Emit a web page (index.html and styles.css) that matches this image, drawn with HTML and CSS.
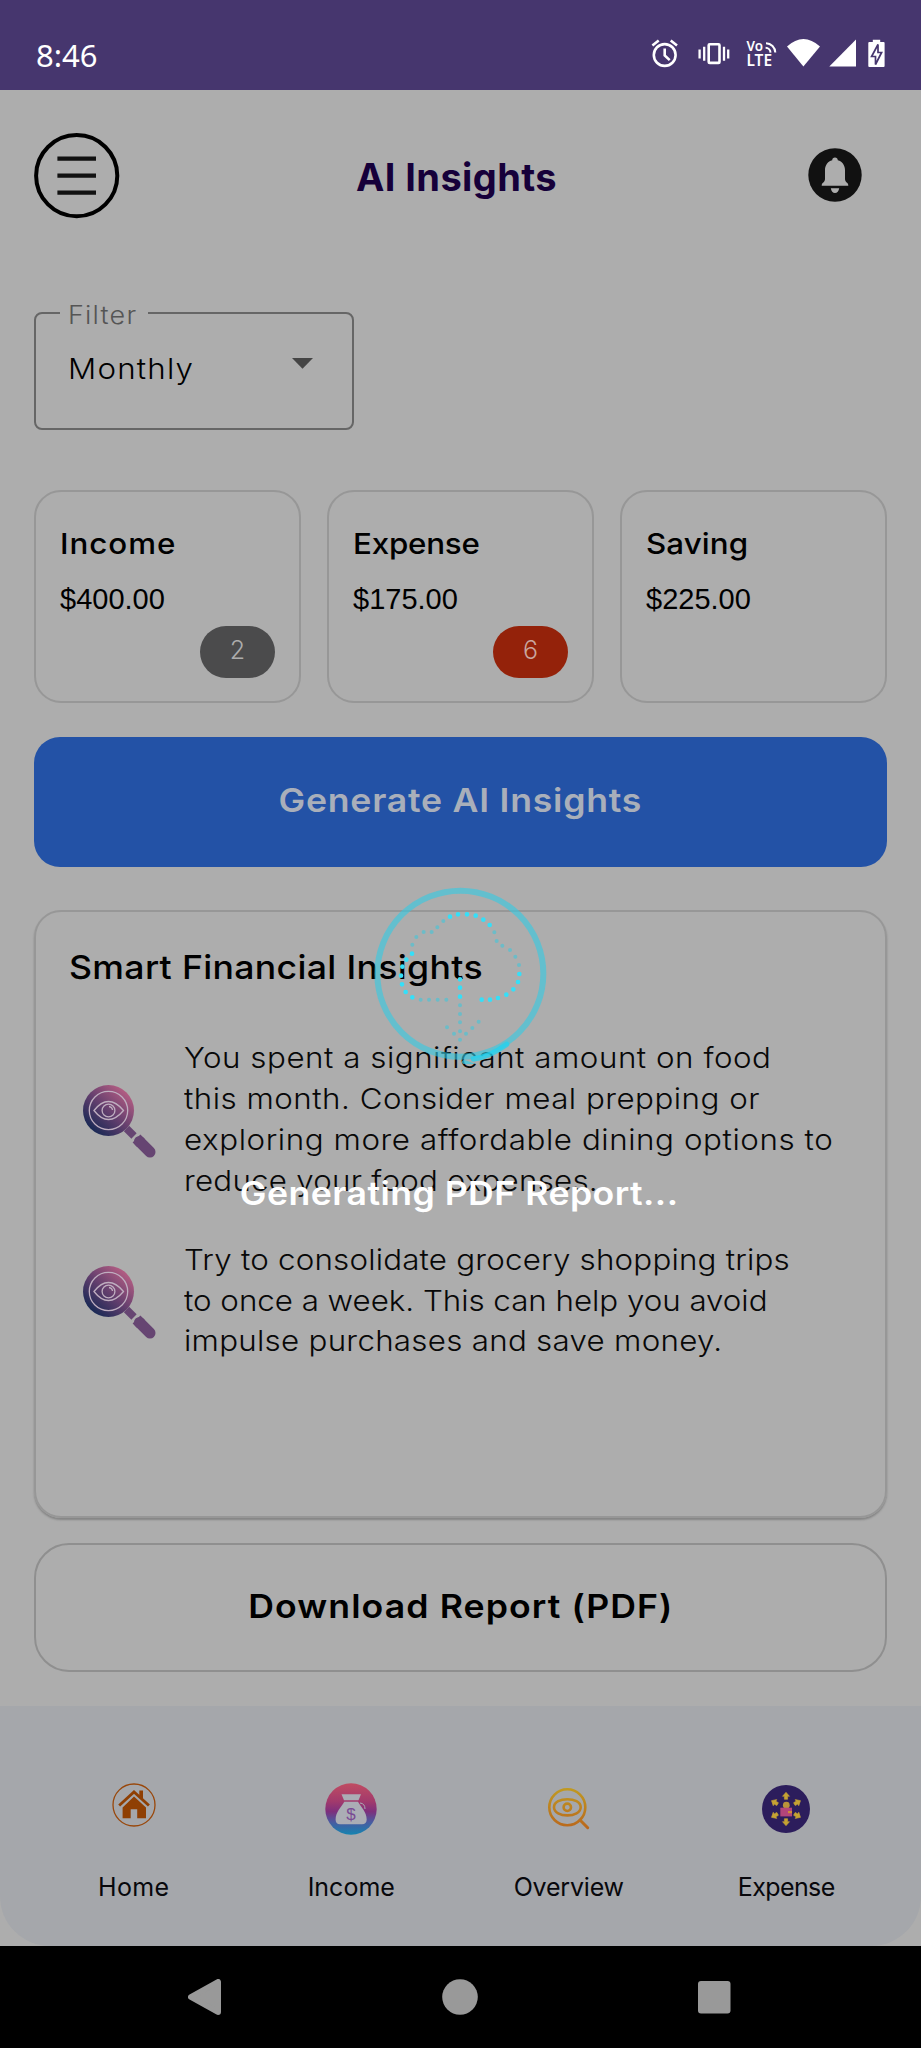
FILE: index.html
```html
<!DOCTYPE html>
<html lang="en">
<head>
<meta charset="utf-8">
<title>AI Insights</title>
<link rel="stylesheet" href="styles.css">
</head>
<body>
<div class="screen">
  <div class="status">
    <span class="clock">8:46</span>
    <svg class="status-icons" width="236" height="32" viewBox="0 0 236 32" fill="none" stroke="#fff" stroke-width="2.6">
      <circle cx="14.7" cy="17" r="10.9"/>
      <path d="M14.7 10.5v7l5 4.6M2.4 7.4l6.3-5M20.7 2.4l6.3 5"/>
      <rect x="58.7" y="6.3" width="10.8" height="18.6" rx="1"/>
      <path d="M54.2 8.7v14M49.6 11.5v9M74 8.7v14M78.2 11.5v9" stroke-width="2.3"/>
      <g class="volte" fill="#fff" stroke="none">
        <text x="96.5" y="13" font-size="13.5" textLength="16.5" lengthAdjust="spacingAndGlyphs">Vo</text>
        <text x="96.5" y="28.3" font-size="15.5" textLength="25.5" lengthAdjust="spacingAndGlyphs">LTE</text>
      </g>
      <path d="M116 5.3a9.5 9.5 0 0 1 9.3 9.3M115.6 9.8a5 5 0 0 1 4.9 4.8" stroke-width="2"/>
      <g fill="#fff" stroke="none">
        <path d="M153.4 28.5 137 8.5Q153.4-6.5 170 8.5Z"/>
        <path d="M179.3 28.5 206 1.6V28.5Z"/>
        <path d="M222.8 4V1.8h7.4V4h3.4a1 1 0 0 1 1 1v23a1 1 0 0 1-1 1h-14.3a1 1 0 0 1-1-1V5a1 1 0 0 1 1-1Z"/>
      </g>
      <path d="M228 6.5 221.6 18.500H225.500V26.500L231.600 14.500H228Z" fill="#fff" stroke="#46366e" stroke-width="1.7"/>
    </svg>
  </div>

  <header class="header">
    <svg width="86" height="86" viewBox="0 0 86 86" fill="none">
      <circle cx="42.700" cy="42.700" r="40.600" stroke="#000" stroke-width="4"/>
      <path d="M23.400 25.700H62M23.400 42.600H62M23.400 59.700H62" stroke="#111" stroke-width="4.200"/>
    </svg>
    <h1 class="title">AI Insights</h1>
    <svg class="bell" width="54" height="54" viewBox="0 0 54 54">
      <circle cx="27" cy="27" r="26.700" fill="#111"/>
      <path fill="#adadad" d="M27 9.500c-1.700 0-2.700 1-2.800 2.700-4.400 1.200-7.200 5-7.200 9.800v9c0 1.600-.7 2.600-2 3.700-.9.700-1.300 1.500-1.300 3h26.600c0-1.500-.4-2.300-1.300-3-1.300-1.100-2-2.100-2-3.700v-9c0-4.800-2.800-8.600-7.200-9.800-.1-1.700-1.100-2.700-2.800-2.700ZM22.800 40.300h8.400c-.5 3-2 4.700-4.200 4.700s-3.700-1.700-4.200-4.700Z"/>
    </svg>
  </header>

  <main class="content">
    <div class="filter">
      <div class="filter-label"><div class="wide">Filter</div></div>
      <div class="filter-value wide">Monthly</div>
      <svg class="caret" width="21" height="11" viewBox="0 0 21 11"><path d="M0 0H21L10.500 10.800Z" fill="#454545"/></svg>
    </div>

    <section class="stats">
      <div class="stat">
        <div class="stat-name wide ls-income">Income</div>
        <div class="stat-value">$400.00</div>
        <div class="badge badge-gray">2</div>
      </div>
      <div class="stat">
        <div class="stat-name wide ls-expense">Expense</div>
        <div class="stat-value">$175.00</div>
        <div class="badge badge-red">6</div>
      </div>
      <div class="stat">
        <div class="stat-name wide ls-saving">Saving</div>
        <div class="stat-value">$225.00</div>
      </div>
    </section>

    <div class="generate"><span class="wide-center">Generate AI Insights</span></div>

    <section class="card">
      <h2 class="card-title wide">Smart Financial Insights</h2>
      <div class="insight">
        <svg class="lens" width="73" height="73" viewBox="0 0 73 73" fill="none">
          <defs><linearGradient id="lens" x1="42" y1="7" x2="9" y2="44" gradientUnits="userSpaceOnUse"><stop offset="0" stop-color="#b05c82"/><stop offset=".5" stop-color="#653f6e"/><stop offset="1" stop-color="#1c2a56"/></linearGradient></defs>
          <circle cx="25.500" cy="25.500" r="25.500" fill="url(#lens)"/>
          <g stroke="#bfaec0" stroke-width="1.300"><circle cx="25.500" cy="25.500" r="19.200"/><path d="M11 25.500Q18 16.500 25.500 16.500T40.500 25.500Q33 34.500 25.500 34.500T11 25.500Z"/><circle cx="25.500" cy="25.500" r="6.400"/><path d="M26 21.500q3 .3 3.600 3.500"/></g>
          <path d="M43.500 43.500 51 51" stroke="#664572" stroke-width="7.500"/>
          <path d="M53.500 53.500 58 58" stroke="#664572" stroke-width="11"/>
          <path d="M56.500 56.500 67 67" stroke="#664572" stroke-width="11" stroke-linecap="round"/>
        </svg>
        <p class="insight-text">
          <span class="wide l1">You spent a significant amount on food</span>
          <span class="wide l2">this month. Consider meal prepping or</span>
          <span class="wide l3">exploring more affordable dining options to</span>
          <span class="wide l3b">reduce your food expenses.</span>
        </p>
      </div>
      <div class="insight">
        <svg class="lens" width="73" height="73" viewBox="0 0 73 73" fill="none">
          <circle cx="25.500" cy="25.500" r="25.500" fill="url(#lens)"/>
          <g stroke="#bfaec0" stroke-width="1.300"><circle cx="25.500" cy="25.500" r="19.200"/><path d="M11 25.500Q18 16.500 25.500 16.500T40.500 25.500Q33 34.500 25.500 34.500T11 25.500Z"/><circle cx="25.500" cy="25.500" r="6.400"/><path d="M26 21.500q3 .3 3.600 3.500"/></g>
          <path d="M43.500 43.500 51 51" stroke="#664572" stroke-width="7.500"/>
          <path d="M53.500 53.500 58 58" stroke="#664572" stroke-width="11"/>
          <path d="M56.500 56.500 67 67" stroke="#664572" stroke-width="11" stroke-linecap="round"/>
        </svg>
        <p class="insight-text">
          <span class="wide l4">Try to consolidate grocery shopping trips</span>
          <span class="wide l5">to once a week. This can help you avoid</span>
          <span class="wide l6">impulse purchases and save money.</span>
        </p>
      </div>
    </section>

    <div class="download"><span class="wide-center">Download Report (PDF)</span></div>
  </main>

  <nav class="tabs">
    <div class="tab">
      <div class="tab-icon">
        <svg class="home" width="44" height="44" viewBox="0 0 44 44" fill="#8f3f03">
          <circle cx="22" cy="22" r="21" fill="none" stroke="#99470a" stroke-width="1.300"/>
          <path d="M27.300 7.500H31V16L27.300 12.500Z"/>
          <path d="M7.200 22.500 22 9 36.900 22.500" fill="none" stroke="#8f3f03" stroke-width="2.800"/>
          <path d="M22 13.500 34 24.500V35.300H25.200V26.300H18.700V35.300H10.600V24.500Z"/>
        </svg>
      </div>
      <span class="tab-name ls-tab-home">Home</span>
    </div>
    <div class="tab">
      <div class="tab-icon">
        <svg width="52" height="52" viewBox="0 0 52 52">
          <defs><linearGradient id="bag" x1="0" y1="0" x2="0" y2="1"><stop offset="0" stop-color="#c04c62"/><stop offset=".35" stop-color="#a23a6c"/><stop offset=".55" stop-color="#7e2f7c"/><stop offset=".75" stop-color="#4a5aa0"/><stop offset="1" stop-color="#1484b0"/></linearGradient></defs>
          <circle cx="26" cy="26" r="25.700" fill="url(#bag)"/>
          <g fill="#abadb5"><path d="M16.500 11.300H36L33.500 17.300H19Z"/><path d="M19.300 18.800H33C36 24 41.700 29 41.700 36.500 41.700 39.500 40 41.300 37 41.300H15C12 41.300 10.600 39.500 10.600 36.500 10.600 29 16.300 24 19.300 18.800Z"/></g>
          <path d="M35 20q5 .5 5 6" fill="none" stroke="#abadb5"/>
          <text class="dollar" x="26" y="36.500" text-anchor="middle">$</text>
        </svg>
      </div>
      <span class="tab-name">Income</span>
    </div>
    <div class="tab">
      <div class="tab-icon">
        <svg width="42" height="42" viewBox="0 0 42 42" fill="none" stroke="url(#gold)" stroke-width="2.600">
          <defs><linearGradient id="gold" x1="0" y1="0" x2="0" y2="42" gradientUnits="userSpaceOnUse"><stop offset="0" stop-color="#c09a22"/><stop offset="1" stop-color="#b9651c"/></linearGradient></defs>
          <circle cx="19.300" cy="19.300" r="18"/>
          <path d="M6 19.300C6 8.500 32.700 8.500 32.700 19.300S6 30.100 6 19.300Z"/>
          <circle cx="19.300" cy="19.300" r="3.700"/>
          <path d="M32 32 39.700 39.700" stroke-width="3" stroke-linecap="round"/>
        </svg>
      </div>
      <span class="tab-name ls-tab-over">Overview</span>
    </div>
    <div class="tab">
      <div class="tab-icon">
        <svg width="48" height="48" viewBox="0 0 48 48">
          <defs><path id="arrow" d="M24 7.300 27.500 11.300H25.600V14.300H22.400V11.300H20.500Z"/></defs>
          <circle cx="24" cy="24" r="24" fill="#2c1d5c"/>
          <g fill="#c5a233" stroke="#c5a233" stroke-width=".6">
            <use href="#arrow"/><use href="#arrow" transform="rotate(60 24 24)"/><use href="#arrow" transform="rotate(120 24 24)"/><use href="#arrow" transform="rotate(180 24 24)"/><use href="#arrow" transform="rotate(240 24 24)"/><use href="#arrow" transform="rotate(300 24 24)"/>
          </g>
          <circle cx="24.300" cy="20.200" r="3.400" fill="#b9923a"/>
          <rect x="18.300" y="22.700" width="11.700" height="8.700" fill="#b3457a"/>
          <rect x="26" y="26" width="4" height="2.200" fill="#d08a3a"/>
        </svg>
      </div>
      <span class="tab-name ls-tab-exp">Expense</span>
    </div>
  </nav>

  <div class="sysnav">
    <svg width="34" height="36" viewBox="0 0 34 36"><path d="M3 18 30 3V33Z" fill="#999" stroke="#999" stroke-width="6" stroke-linejoin="round"/></svg>
    <svg width="36" height="36" viewBox="0 0 36 36"><circle cx="18" cy="18" r="17.800" fill="#999"/></svg>
    <svg width="33" height="33" viewBox="0 0 33 33"><rect width="32.500" height="32.500" rx="3" fill="#999"/></svg>
  </div>

  <div class="overlay">
    <svg class="spinner" width="180" height="180" viewBox="90 42 540 540" fill="none">
      <circle cx="361" cy="311" r="249" stroke="#32cbe4" stroke-opacity=".6" stroke-width="18"/>
      <path d="M400 567Q450 560 500 523" stroke="#1fd3f0" stroke-opacity=".75" stroke-width="16" stroke-linecap="round"/>
      <path d="M372 576 402 586" stroke="#35cbe2" stroke-opacity=".7" stroke-width="12" stroke-linecap="round"/>
      <path class="dots" d="M330 140h0M354 133h0M381 133h0M407 137h0M430 149h0M449 165h0M216 251h0M199 269h0M187 290h0M183 317h0M186 343h0M197 366h0M217 382h0M360 328h0M360 353h0M360 380h0M538 312h0M534 336h0M520 358h0M499 374h0M474 384h0M450 389h0M425 389h0"/>
      <path class="dots faint" d="M310 153h0M292 172h0M275 186h0M251 186h0M229 201h0M217 224h0M242 389h0M267 389h0M293 389h0M319 389h0M463 187h0M470 213h0M487 227h0M510 240h0M526 260h0M537 285h0M360 406h0M360 432h0M360 457h0M360 484h0M360 509h0M321 472h0M342 491h0M378 491h0M397 474h0M416 455h0"/>
    </svg>
    <div class="overlay-text wide-center">Generating PDF Report...</div>
  </div>
</div>
</body>
</html>
```
FILE: styles.css
```css
* { box-sizing: border-box; }
body { margin: 0; background: #adadad; font-family: Inter, "Liberation Sans", sans-serif; color: #000; }
h1, h2, p { margin: 0; }
svg { display: block; flex: none; }
.screen { position: relative; width: 921px; height: 2048px; display: flex; flex-direction: column; overflow: hidden; white-space: nowrap; }

/* slightly extended letterforms */
.wide { transform: scaleX(1.08); transform-origin: 0 50%; }
.wide-center { transform: scaleX(1.08); }

.status { height: 90px; background: #46366e; display: flex; justify-content: space-between; padding: 38px 35px 0 36px; }
.clock { font: 31px/34px "Noto Sans", sans-serif; color: #fff; }
.volte { font-family: "Noto Sans", sans-serif; font-weight: 600; }

.header { display: flex; justify-content: space-between; align-items: center; padding: 43px 59px 0 34px; height: 129px; }
.title { font-size: 38px; line-height: 46px; font-weight: 750; letter-spacing: .4px; color: #16003a; padding: 2px 15px 0 0; }
.bell { margin-top: -2px; }

.content { padding: 93px 34px 0; height: 1487px; }
.filter { position: relative; width: 320px; height: 118px; border: 2px solid #666; border-radius: 8px; display: flex; justify-content: space-between; padding: 35px 39px 0 32px; }
.filter-label { position: absolute; left: 24px; top: -14px; width: 88px; padding-left: 8px; background: #adadad; font-size: 25px; line-height: 30px; font-weight: 350; letter-spacing: 1.1px; color: #555; }
.filter-value { font-size: 29px; line-height: 40px; font-weight: 350; letter-spacing: 1.1px; }
.caret { margin-top: 9px; }

.stats { display: grid; grid-template-columns: repeat(3, 267px); gap: 26px; margin-top: 60px; }
.stat { height: 213px; border: 2px solid #979797; border-radius: 27px; padding: 34px 24px 0 24px; display: flex; flex-direction: column; }
.stat-name { font-size: 29px; line-height: 36px; font-weight: 480; }
.ls-income { letter-spacing: .9px; }
.ls-expense { letter-spacing: -.2px; }
.ls-saving { letter-spacing: .1px; }
.stat-value { font: 29px/36px "Liberation Sans", Arial, sans-serif; margin-top: 19px; }
.badge { align-self: flex-end; margin-top: 9px; width: 75px; height: 52px; border-radius: 26px; font-size: 25px; line-height: 48px; font-weight: 350; text-align: center; color: #adadad; }
.badge-gray { background: #4b4b4c; }
.badge-red { background: #94220a; color: #c9a69e; }

.generate, .download { display: flex; justify-content: center; align-items: center; font-size: 33px; font-weight: 600; }
.generate { height: 130px; margin-top: 34px; padding-bottom: 4px; border-radius: 26px; background: #2352a6; color: #a9afba; letter-spacing: .7px; }

.card { height: 608px; margin-top: 43px; padding: 33px 34px 0 33px; border: 2px solid #979797; border-radius: 27px; box-shadow: 0 2px 2px #858585; }
.card-title { font-size: 33px; line-height: 44px; font-weight: 480; letter-spacing: .3px; margin-bottom: 49px; }
.insight { display: flex; align-items: center; gap: 28px; padding-left: 14px; margin-bottom: 38px; }
.lens { margin-top: 4px; }
.insight-text { font-size: 29px; line-height: 40.9px; font-weight: 350; color: #080808; }
.insight-text span { display: block; }
.l1 { letter-spacing: .48px; }
.l2 { letter-spacing: .45px; }
.l3 { letter-spacing: .53px; }
.l3b { letter-spacing: .2px; }
.l4 { letter-spacing: .18px; }
.l5 { letter-spacing: -.03px; }
.l6 { letter-spacing: .25px; }

.download { height: 129px; margin-top: 25px; padding-bottom: 3px; border: 2px solid #8f8f8f; border-radius: 35px; letter-spacing: 1px; }

.tabs { height: 240px; flex: none; display: grid; grid-template-columns: repeat(4, 1fr); padding: 77px 26px 0 25px; background: #a5a7ab; border-radius: 0 0 50px 50px; }
.tab { display: flex; flex-direction: column; align-items: center; }
.tab-icon { height: 52px; display: flex; align-items: center; }
.home { margin-top: -8px; }
.dollar { font: 17px "Liberation Sans", sans-serif; fill: #7a4a94; }
.tab-name { font-size: 25px; line-height: 30px; font-weight: 420; margin-top: 37px; color: #08080c; }
.ls-tab-home { letter-spacing: .4px; }
.ls-tab-over { letter-spacing: -.2px; }
.ls-tab-exp { letter-spacing: -.6px; }

.sysnav { height: 102px; flex: none; background: #000; display: flex; justify-content: space-between; align-items: center; padding: 0 190px 0 188px; }

.overlay { position: absolute; left: 0; top: 884px; width: 919px; display: flex; flex-direction: column; align-items: center; }
.dots { stroke: #35dff8; stroke-width: 14; stroke-linecap: round; }
.faint { stroke: #2ccbe4; stroke-opacity: .5; stroke-width: 12; }
.overlay-text { margin-top: 109px; font-size: 33px; line-height: 40px; font-weight: 600; letter-spacing: .42px; color: #fff; }
```
